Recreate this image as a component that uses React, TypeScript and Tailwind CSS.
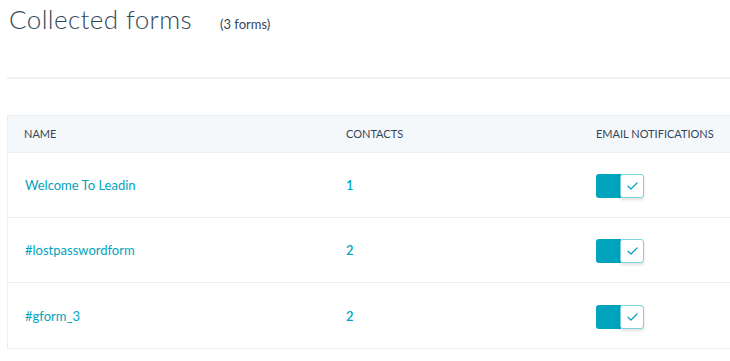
const forms = [
  { name: "Welcome To Leadin", contacts: 1 },
  { name: "#lostpasswordform", contacts: 2 },
  { name: "#gform_3", contacts: 2 },
];

function Toggle() {
  return (
    <div className="flex h-[24px] w-[48px]">
      <div className="h-full w-[25px] rounded-l-[3px] bg-[#00a4bd]" />
      <div className="-ml-px flex h-full w-[24px] items-center justify-center rounded-[3px] border border-[#7fd1de] bg-white shadow-[0_2px_3px_rgba(0,0,0,0.12)]">
        <svg width="11" height="8" viewBox="0 0 11 8" fill="none">
          <path d="M1 4.2 L4 7 L10 1" stroke="#00a4bd" strokeWidth="1.2" strokeLinecap="round" strokeLinejoin="round" />
        </svg>
      </div>
    </div>
  );
}

export default function App() {
  return (
    <div className="h-[361px] w-[730px] overflow-hidden bg-white font-['Lato',_sans-serif]">
      <div className="flex items-baseline pl-[9px] pt-[1px]">
        <h1 className="text-[26px] font-light leading-[36px] tracking-[0.4px] text-[#33475b]">Collected forms</h1>
        <span className="ml-[28px] text-[13px] text-[#33475b]">(3 forms)</span>
      </div>
      <div className="ml-[7px] mt-[40px] h-[2px] bg-[#eef1f4]" />
      <div className="ml-[7px] mt-[36px] border-b border-l border-[#eaf0f6]">
        <div className="flex h-[38px] items-center border-b border-t border-[#eaf0f6] bg-[#f5f8fa] pt-[1px] text-[11px] uppercase text-[#33475b]">
          <div className="w-[338px] pl-[16px]">Name</div>
          <div className="w-[250px]">Contacts</div>
          <div>Email notifications</div>
        </div>
        {forms.map((f, i) => (
          <div
            key={f.name}
            className={`flex h-[65px] items-center pt-[2px] text-[13px] text-[#00a4bd] ${i < forms.length - 1 ? "border-b border-[#eaf0f6]" : ""}`}
          >
            <div className="w-[338px] pl-[17px]">{f.name}</div>
            <div className="w-[250px] font-semibold">{f.contacts}</div>
            <Toggle />
          </div>
        ))}
      </div>
    </div>
  );
}
